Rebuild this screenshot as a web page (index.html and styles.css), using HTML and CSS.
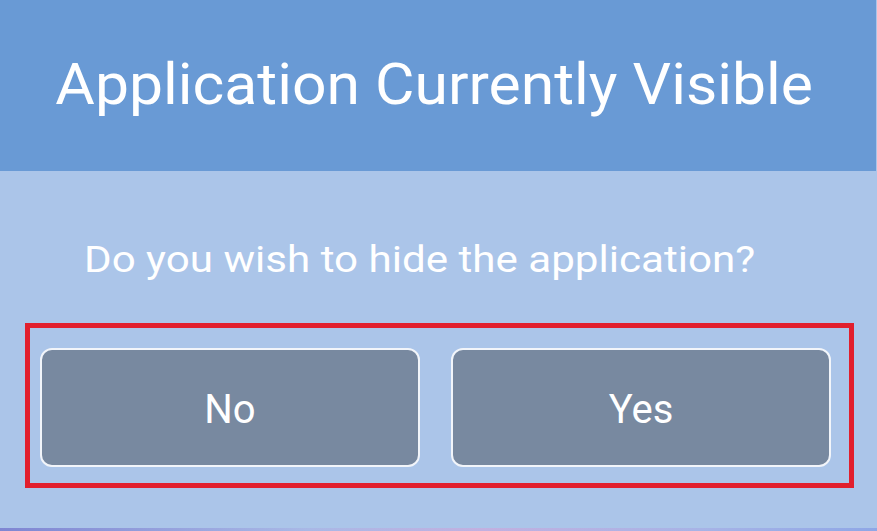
FILE: index.html
```html
<!DOCTYPE html>
<html lang="en">
<head>
<meta charset="utf-8">
<title>Application Currently Visible</title>
<link rel="stylesheet" href="styles.css">
</head>
<body>
<div class="dialog">
  <header class="dialog-header">
    <h1 class="dialog-title">Application Currently Visible</h1>
  </header>
  <main class="dialog-body">
    <p class="dialog-question">Do you wish to hide the application?</p>
    <div class="highlight">
      <button class="btn" type="button">No</button>
      <button class="btn" type="button">Yes</button>
    </div>
  </main>
  <div class="bottom-strip"></div>
</div>
</body>
</html>
```

FILE: styles.css
```css
html, body {
  margin: 0;
  padding: 0;
}

body {
  width: 877px;
  height: 531px;
  overflow: hidden;
  background: #abc5e9;
  font-family: Roboto, "Liberation Sans", sans-serif;
  color: #ffffff;
}

.dialog {
  display: flex;
  flex-direction: column;
  height: 531px;
}

.dialog-header {
  height: 171px;
  flex: 0 0 171px;
  background: #699ad5;
  border-right: 1px solid #abc5e9;
  display: flex;
  align-items: center;
  justify-content: center;
  box-sizing: border-box;
  padding: 0 8px 4px 0;
}

.dialog-title {
  margin: 0;
  font-size: 58px;
  font-weight: 400;
  line-height: 1;
  white-space: nowrap;
  transform: scaleX(1.046);
}

.dialog-body {
  flex: 1 1 auto;
  display: flex;
  flex-direction: column;
}

.dialog-question {
  align-self: flex-start;
  margin: 68px 0 0 84px;
  font-size: 36px;
  line-height: 42px;
  font-weight: 400;
  white-space: nowrap;
  transform: scaleX(1.17);
  transform-origin: left center;
}

.highlight {
  margin: 42px 0 0 25px;
  width: 829px;
  height: 165px;
  box-sizing: border-box;
  border: 5px solid #e11f2d;
  padding: 20px 18px 15px 10px;
  display: flex;
  gap: 31px;
}

.btn {
  width: 380px;
  height: 119px;
  box-sizing: border-box;
  background: #7889a0;
  border: 2px solid #f2f5fa;
  border-radius: 12px;
  color: #ffffff;
  font-family: Roboto, "Liberation Sans", sans-serif;
  font-size: 40px;
  line-height: 1;
  padding: 4px 0 0 0;
  cursor: pointer;
}

.bottom-strip {
  height: 3px;
  flex: 0 0 3px;
  background: linear-gradient(90deg, #7f86d2 0%, #a9b8e6 35%, #c2b0e0 55%, #a7b3e6 80%, #8fa7e6 100%);
}
```
